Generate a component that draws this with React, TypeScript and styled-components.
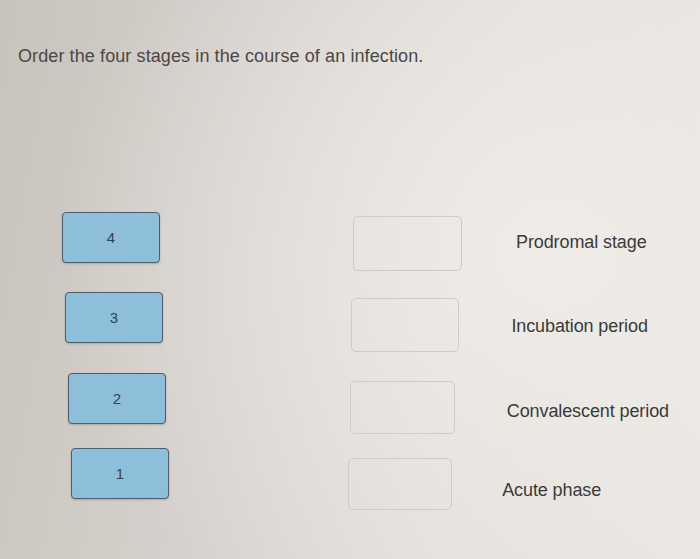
import React from "react";
import styled, { createGlobalStyle } from "styled-components";

const GlobalStyle = createGlobalStyle`
  html, body {
    margin: 0;
    padding: 0;
  }
  body {
    font-family: "Liberation Sans", Arial, sans-serif;
  }
`;

// each row: the number tile, the empty drop target and its stage label
const rows = [
  { num: "4", label: "Prodromal stage", space: 0 },
  { num: "3", label: "Incubation period", space: 29 },
  { num: "2", label: "Convalescent period", space: 30 },
  { num: "1", label: "Acute phase", space: 24 },
];

export default function App() {
  return (
    <>
      <GlobalStyle />
      <Page>
        <Question>Order the four stages in the course of an infection.</Question>
        <Board>
          {rows.map((r, i) => (
            <Row key={r.label} $i={i} $space={r.space}>
              <Tile>{r.num}</Tile>
              <Target $i={i} />
              <Label $i={i}>{r.label}</Label>
            </Row>
          ))}
        </Board>
      </Page>
    </>
  );
}

const Page = styled.div`
  width: 700px;
  height: 559px;
  box-sizing: border-box;
  padding: 46px 0 0 18px;
  overflow: hidden;
  background:
    radial-gradient(ellipse 70% 80% at 78% 45%, rgba(240, 237, 232, 0.95), rgba(240, 237, 232, 0) 100%),
    linear-gradient(100deg, #c9c3be 0%, #d6d1cc 35%, #e2ded9 65%, #e9e6e1 100%);
`;

const Question = styled.div`
  font-size: 18px;
  letter-spacing: 0.1px;
  color: #4a4846;
`;

const Board = styled.div`
  display: flex;
  flex-direction: column;
  margin-top: 145px;
`;

const Row = styled.div<{ $i: number; $space: number }>`
  display: flex;
  align-items: flex-start;
  height: 51px;
  margin-top: ${(p) => p.$space}px;
  padding-left: ${(p) => 44 + p.$i * 3}px;
`;

const Tile = styled.div`
  flex: none;
  width: 98px;
  height: 51px;
  box-sizing: border-box;
  display: flex;
  align-items: center;
  justify-content: center;
  background: #8dbfdb;
  border: 1px solid #4e5d68;
  border-radius: 4px;
  box-shadow: 0 1px 2px rgba(60, 60, 60, 0.25);
  font-size: 15px;
  color: #34434e;
`;

const Target = styled.div<{ $i: number }>`
  flex: none;
  width: ${(p) => 109 - p.$i * 1.7}px;
  height: ${(p) => 55 - p.$i}px;
  box-sizing: border-box;
  margin-top: ${(p) => 4 + p.$i * 2}px;
  margin-left: ${(p) => 193 - p.$i * 4.7}px;
  border: 1px solid #cfcbc7;
  border-radius: 5px;
`;

const Label = styled.div<{ $i: number }>`
  flex: none;
  margin-top: ${(p) => 20 + p.$i * 4}px;
  margin-left: ${(p) => 54 - p.$i * 1.2}px;
  font-size: 18px;
  letter-spacing: -0.1px;
  color: #3a3a3a;
`;
